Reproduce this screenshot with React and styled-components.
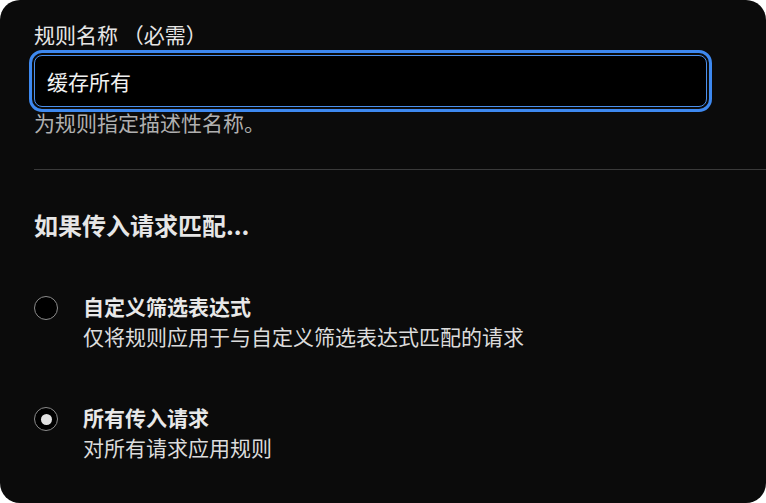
import React, { useState } from "react";
import styled, { createGlobalStyle } from "styled-components";

const Global = createGlobalStyle`
  html, body { margin: 0; padding: 0; background: #ffffff; }
  * { box-sizing: border-box; }
  body { font-family: "Noto Sans CJK SC", "Noto Sans", sans-serif; }
`;

const Card = styled.div`
  width: 766px;
  height: 503px;
  background: #0b0b0b;
  border-radius: 20px;
  padding: 20px 0 0 34px;
  display: flex;
  flex-direction: column;
  overflow: hidden;
`;

const Label = styled.label`
  font-size: 21px;
  line-height: 28px;
  color: #e6e6e6;
`;

const Input = styled.input`
  margin-top: 7px;
  width: 673px;
  height: 52px;
  background: #000;
  border: 1px solid #4a8fec;
  border-radius: 8px;
  outline: 3px solid #3e89f0;
  outline-offset: 2px;
  padding: 0 12px;
  font-family: inherit;
  font-size: 21px;
  color: #f0f0f0;
`;

const Helper = styled.div`
  margin-top: 1px;
  font-size: 21px;
  line-height: 28px;
  color: #b0b0b0;
`;

const Divider = styled.hr`
  margin: 33px 0 0 0;
  border: none;
  height: 1px;
  background: #3a3a3a;
  width: 100%;
`;

const Heading = styled.h2`
  margin: 39px 0 0 0;
  font-size: 24px;
  line-height: 32px;
  font-weight: 700;
  color: #e6e6e6;
`;

const Options = styled.div`
  margin-top: 50px;
  display: flex;
  flex-direction: column;
  gap: 51px;
`;

const Option = styled.div`
  display: flex;
  align-items: flex-start;
  gap: 25px;
  cursor: pointer;
`;

const Radio = styled.span`
  margin-top: 5px;
  width: 24px;
  height: 24px;
  flex: none;
  border-radius: 50%;
  border: 1.5px solid #8c8c8c;
  background: #000;
  display: flex;
  align-items: center;
  justify-content: center;
  &::after {
    content: "";
    width: 11px;
    height: 11px;
    border-radius: 50%;
    background: #e2e2e2;
    display: ${(p) => (p.$checked ? "block" : "none")};
  }
`;

const OptionText = styled.div`
  display: flex;
  flex-direction: column;
`;

const OptionTitle = styled.div`
  font-size: 21px;
  line-height: 30px;
  font-weight: 700;
  color: #e8e8e8;
`;

const OptionDesc = styled.div`
  font-size: 21px;
  line-height: 30px;
  color: #dcdcdc;
`;

const options = [
  { id: "custom", title: "自定义筛选表达式", desc: "仅将规则应用于与自定义筛选表达式匹配的请求" },
  { id: "all", title: "所有传入请求", desc: "对所有请求应用规则" },
];

export default function App() {
  const [value, setValue] = useState("all");
  return (
    <>
      <Global />
      <Card>
        <Label>规则名称 （必需）</Label>
        <Input defaultValue="缓存所有" />
        <Helper>为规则指定描述性名称。</Helper>
        <Divider />
        <Heading>如果传入请求匹配...</Heading>
        <Options>
          {options.map((o) => (
            <Option key={o.id} onClick={() => setValue(o.id)}>
              <Radio $checked={value === o.id} />
              <OptionText>
                <OptionTitle>{o.title}</OptionTitle>
                <OptionDesc>{o.desc}</OptionDesc>
              </OptionText>
            </Option>
          ))}
        </Options>
      </Card>
    </>
  );
}
